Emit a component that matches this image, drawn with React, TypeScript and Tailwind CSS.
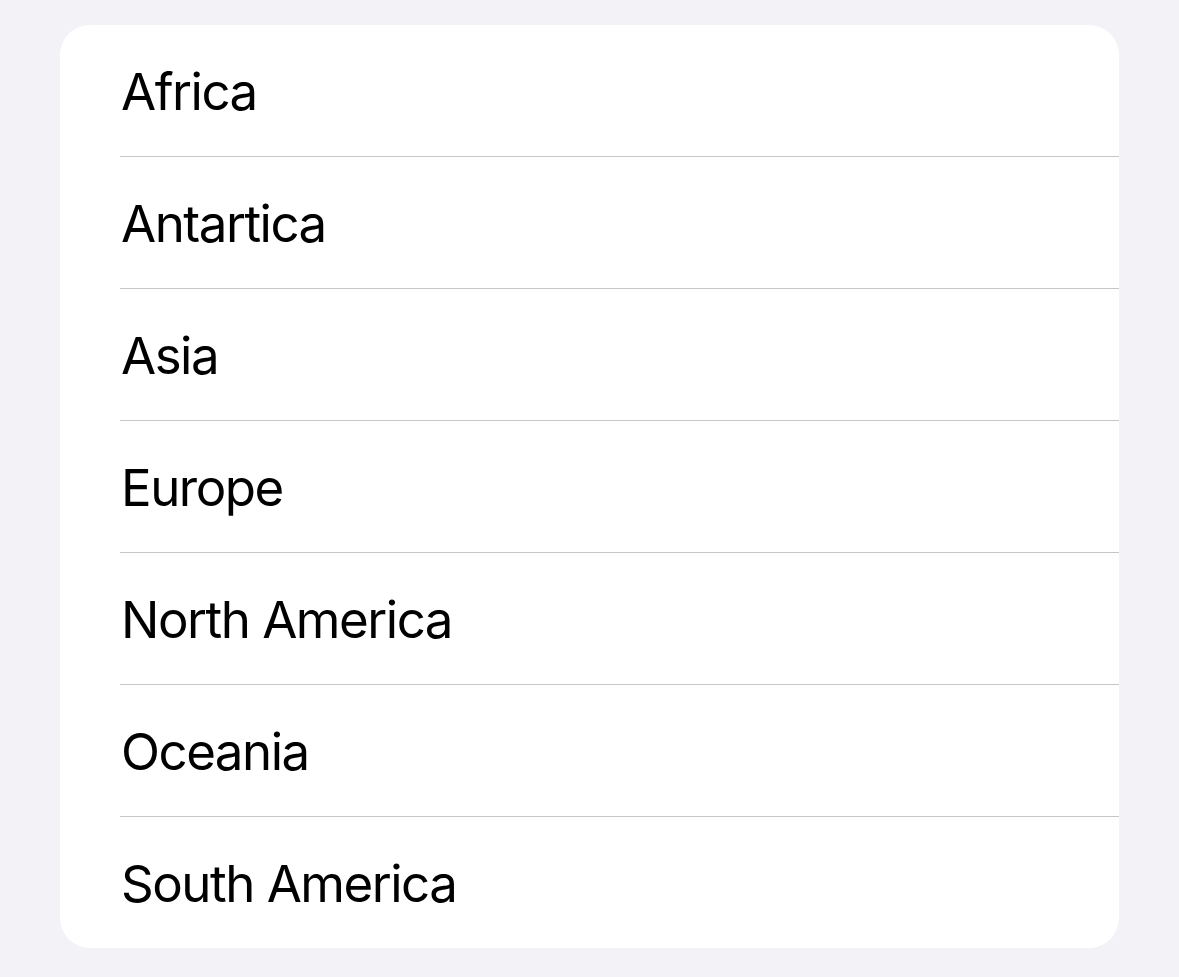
import React from "react";

const continents = [
  "Africa",
  "Antartica",
  "Asia",
  "Europe",
  "North America",
  "Oceania",
  "South America",
];

export default function App() {
  return (
    <div className="min-h-[977px] w-full bg-[#f2f2f7] px-[60px] pt-[25px] pb-[29px]">
      <div className="overflow-hidden rounded-[30px] bg-white">
        {continents.map((name, i) => (
          <div key={name} className="pl-[60px]">
            <div
              className={
                "flex items-center " +
                (i < continents.length - 1
                  ? "h-[132px] border-b border-[#c6c6c8]"
                  : "h-[131px]")
              }
            >
              <span
                className="pl-px pt-px text-[51px] leading-none tracking-[-1.5px] text-black"
                style={{ fontFamily: "Inter, 'Noto Sans', sans-serif" }}
              >
                {name}
              </span>
            </div>
          </div>
        ))}
      </div>
    </div>
  );
}
